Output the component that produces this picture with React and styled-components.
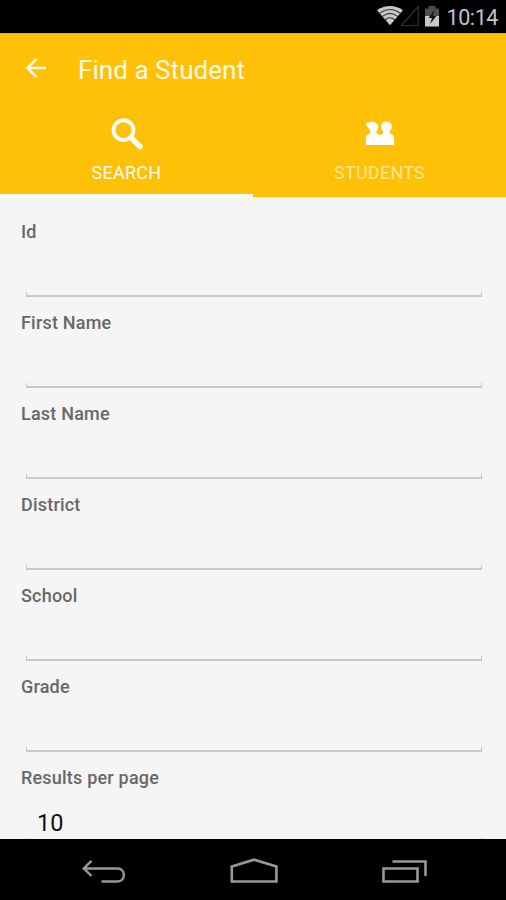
import React from "react";
import styled, { createGlobalStyle } from "styled-components";

const GlobalStyle = createGlobalStyle`
  * { box-sizing: border-box; }
  html, body { margin: 0; padding: 0; background: #000; }
  body { font-family: Roboto, "Noto Sans", sans-serif; overflow: hidden; }
`;

const Screen = styled.div`
  width: 506px;
  height: 900px;
  display: flex;
  flex-direction: column;
  overflow: hidden;
  background: #f5f5f5;
`;

const StatusBar = styled.header`
  flex: 0 0 33px;
  height: 33px;
  min-height: 0;
  display: flex;
  justify-content: flex-end;
  background: #000;
`;

const StatusIcons = styled.svg`
  width: 68px;
  height: 33px;
  display: block;
`;

const Clock = styled.time`
  width: 64px;
  height: 33px;
  padding-left: 4.5px;
  color: #c4c4c4;
  font-size: 21.5px;
  line-height: 35px;
  letter-spacing: -0.4px;
  white-space: nowrap;
`;

const AppBar = styled.div`
  flex: 0 0 164px;
  display: flex;
  flex-direction: column;
  background: #ffc107;
  border-top: 1px solid #efb300;
`;

const TitleRow = styled.div`
  height: 73px;
  display: flex;
  align-items: center;
  padding: 0 0 2px 24px;
`;

const BackButton = styled.button`
  width: 54px;
  height: 24px;
  padding: 0;
  border: 0;
  background: none;
  svg { display: block; margin-top: -3px; }
`;

const Title = styled.h1`
  margin: 0;
  color: #fffbe9;
  font-size: 26px;
  font-weight: 400;
  line-height: 32px;
  letter-spacing: 0.05px;
  white-space: nowrap;
`;

const Tabs = styled.nav`
  flex: 1;
  display: grid;
  grid-template-columns: 1fr 1fr;
`;

const Tab = styled.button`
  display: flex;
  flex-direction: column;
  align-items: center;
  justify-content: flex-start;
  padding: 10px 0 0;
  border: 0;
  border-bottom: 3px solid ${(p) => (p.$active ? "#fffdf5" : "#ffc107")};
  background: none;
  color: ${(p) => (p.$active ? "#fffaf0" : "#ffe796")};
  font: 400 18px/24px Roboto, sans-serif;
  letter-spacing: 0.25px;
  svg { display: block; margin-bottom: 10px; }
`;

const Form = styled.main`
  flex: 1;
  min-height: 0;
  overflow: hidden;
  padding: 21px 24px 0 21px;
`;

const Field = styled.label`
  height: 90.95px;
  display: flex;
  flex-direction: column;
`;

const Label = styled.span`
  height: 28px;
  color: #686868;
  font-size: 18px;
  font-weight: 500;
  line-height: 28px;
  letter-spacing: 0.2px;
  white-space: nowrap;
`;

const InputBox = styled.span`
  height: 51px;
  margin-left: 5px;
  display: flex;
  flex-direction: column;
  justify-content: flex-end;
`;

const Input = styled.input`
  width: 100%;
  height: 46px;
  padding: 17px 12px 0 11px;
  border: 0;
  outline: 0;
  background: transparent;
  color: #111;
  font: 400 23.5px/29px Roboto, sans-serif;
`;

const Underline = styled.span`
  flex: 0 0 5px;
  border: solid #c8c8c8;
  border-width: 0 1.5px 2px;
`;

const NavBar = styled.footer`
  flex: 0 0 61px;
  display: flex;
  justify-content: space-between;
  align-items: center;
  padding: 4px 79px 0 81px;
  background: #000;
  svg { display: block; }
`;

const fields = [
  { label: "Id", value: "" },
  { label: "First Name", value: "" },
  { label: "Last Name", value: "" },
  { label: "District", value: "" },
  { label: "School", value: "" },
  { label: "Grade", value: "" },
  { label: "Results per page", value: "10" },
];

function SystemStatus() {
  return (
    <StatusIcons viewBox="374 0 68 33" aria-hidden="true">
      <path d="M377 10.200Q390 1.800 403 10.200L390 25.300Z" fill="#c8c8c8" />
      <g fill="none" stroke="#333" strokeWidth="1.1">
        <path d="M379.500 13.500Q390 5.500 400.500 13.500" />
        <path d="M382 16.700Q390 10 398 16.700" />
        <path d="M385 20Q390 15.500 395 20" />
      </g>
      <path d="M418.200 6.500V25.500H401.500Z" fill="none" stroke="#333" strokeWidth="1.200" />
      <path d="M425 8.500h3.500V6h7v2.500h3.500V17h-14Z" fill="#505050" />
      <path d="M425 16h14v10.500h-14Z" fill="#c8c8c8" />
      <path d="M434.500 10L428.500 18H432L430 24L436.500 16H433Z" fill="#161616" />
    </StatusIcons>
  );
}

function BackArrow() {
  return (
    <svg width="24" height="24" viewBox="0 0 24 24" fill="none" stroke="#fffbe9" strokeWidth="2.500">
      <path d="M12.500 3L3.300 12L12.500 21M3.500 12H22" />
    </svg>
  );
}

function SearchIcon() {
  return (
    <svg width="34" height="34" viewBox="0 0 34 34" fill="none" stroke="#fffdf5">
      <circle cx="13.500" cy="13.200" r="9.900" strokeWidth="4" />
      <path d="M20.500 20.200L22.500 22.200" strokeWidth="4" />
      <path d="M22.500 22.200L30 29.500" strokeWidth="5.600" strokeLinecap="round" />
    </svg>
  );
}

function StudentsIcon() {
  return (
    <svg width="34" height="34" viewBox="0 2.500 34 34" fill="#fffefa">
      <path d="M3.200 9.200C2.900 7.500 4.500 8 6 8C9 6.400 14 7.600 15.200 11C15.700 13.200 14.800 15.400 13.600 17V19L15.500 20H18.500L20.200 19V17C18.400 15.400 17.400 12.500 18.200 10.200C20 6 26.800 6 28.600 10.200C29.500 12.700 28.200 15.500 26.600 17.200V18.600L29.800 20.400Q31.200 21.200 31.200 23V30.600H2.800V23Q2.800 21.200 4.200 20.400L7.500 18.500V17.300C8.300 15.900 5.500 14 4.500 12.400Q3 11.800 3.200 9.200Z" />
    </svg>
  );
}

function NavBack() {
  return (
    <svg width="46" height="30" viewBox="81 857 46 30" fill="none" stroke="#999" strokeWidth="2.400">
      <path d="M91.500 860.800L83.800 868.400L91.500 876M84 868.500H117.500C126 868.500 126 881.500 117.500 881.500H101.500" />
    </svg>
  );
}

function NavHome() {
  return (
    <svg width="50" height="30" viewBox="229 857 50 30" fill="none" stroke="#999" strokeWidth="2.600">
      <path d="M231.800 881.500V866.500L254 859.700L276.400 866.500V881.500Z" />
    </svg>
  );
}

function NavRecents() {
  return (
    <svg width="46" height="30" viewBox="381 857 46 30" fill="none" stroke="#999" strokeWidth="2.600">
      <path d="M383.500 868.500H417.500V881.500H383.500ZM392.500 861.500H425.500V876" />
    </svg>
  );
}

export default function App() {
  return (
    <>
      <GlobalStyle />
      <Screen>
        <StatusBar>
          <SystemStatus />
          <Clock>10:14</Clock>
        </StatusBar>
        <AppBar>
          <TitleRow>
            <BackButton aria-label="Back"><BackArrow /></BackButton>
            <Title>Find a Student</Title>
          </TitleRow>
          <Tabs>
            <Tab $active><SearchIcon />SEARCH</Tab>
            <Tab><StudentsIcon />STUDENTS</Tab>
          </Tabs>
        </AppBar>
        <Form>
          {fields.map(({ label, value }) => (
            <Field key={label}>
              <Label>{label}</Label>
              <InputBox>
                <Input defaultValue={value} aria-label={label} />
                <Underline />
              </InputBox>
            </Field>
          ))}
        </Form>
        <NavBar>
          <NavBack />
          <NavHome />
          <NavRecents />
        </NavBar>
      </Screen>
    </>
  );
}
